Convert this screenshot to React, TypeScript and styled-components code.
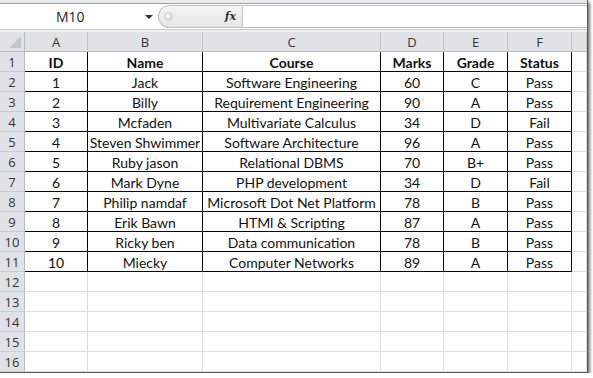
import React from "react";
import styled, { createGlobalStyle } from "styled-components";

const Global = createGlobalStyle`
  html, body { margin: 0; padding: 0; background: #ffffff; }
  body { font-family: "Lato", "Open Sans", sans-serif; }
`;

const Window = styled.div`
  width: 587px;
  height: 372px;
  border-right: 1px solid #5a5a5a;
  border-bottom: 1px solid #5a5a5a;
  box-shadow: 2px 2px 3px rgba(0, 0, 0, 0.55);
  overflow: hidden;
  display: flex;
  flex-direction: column;
  background: #fff;
`;

const TopStrip = styled.div`
  height: 3px;
  background: #e6e9ed;
  border-bottom: 1px solid #9aa0a6;
`;

const FormulaRow = styled.div`
  height: 25px;
  display: flex;
  align-items: stretch;
  background: #fff;
`;

const NameBox = styled.div`
  width: 158px;
  display: flex;
  align-items: center;
  position: relative;
  font-family: "Open Sans", sans-serif;
  font-size: 14px;
  color: #222;
`;

const NameText = styled.span`
  margin-left: 56px;
`;

const Arrow = styled.span`
  position: absolute;
  left: 145px;
  top: 11px;
  width: 0;
  height: 0;
  border-left: 4px solid transparent;
  border-right: 4px solid transparent;
  border-top: 4px solid #333;
`;

const FxPill = styled.div`
  width: 85px;
  margin: 1px 0 1px 0;
  background: linear-gradient(#f3f4f6, #e4e6ea);
  border: 1px solid #b9bec5;
  border-right: 1px solid #c5c9cf;
  border-radius: 12px 0 0 12px;
  display: flex;
  align-items: center;
  justify-content: space-between;
  padding: 0 6px 0 5px;
  box-sizing: border-box;
`;

const Grip = styled.span`
  width: 7px;
  height: 7px;
  border-radius: 50%;
  background: radial-gradient(circle at 40% 40%, #ffffff, #c4c8ce);
  border: 1px solid #c9cdd2;
`;

const Fx = styled.span`
  font-family: "DejaVu Serif", "Liberation Serif", serif;
  font-style: italic;
  font-weight: bold;
  font-size: 11px;
  color: #333;
`;

const FormulaInput = styled.div`
  flex: 1;
  margin: 1px 0;
  border-top: 1px solid #b9bec5;
  border-bottom: 1px solid #b9bec5;
  background: #fff;
`;

const Gap = styled.div`
  height: 3px;
  background: #eef0f2;
  border-top: 1px solid #c6cbd1;
  box-sizing: border-box;
`;

const Sheet = styled.div`
  display: grid;
  grid-template-columns: 25px 63px 115px 178px 63px 64px 64px 1fr;
  grid-auto-rows: 20px;
`;

const Corner = styled.div`
  background: #dfe3e8;
  border-right: 1px solid #b6bcc4;
  border-bottom: 1px solid #b6bcc4;
  box-sizing: border-box;
  position: relative;
  &::after {
    content: "";
    position: absolute;
    right: 3px;
    bottom: 3px;
    width: 0;
    height: 0;
    border-left: 12px solid transparent;
    border-bottom: 12px solid #c3c8cf;
  }
`;

const ColHead = styled.div`
  background: #dfe3e8;
  border-right: 1px solid #c0c6cd;
  border-bottom: 1px solid #b6bcc4;
  box-sizing: border-box;
  display: flex;
  align-items: center;
  justify-content: center;
  font-family: "Open Sans", sans-serif;
  font-size: 13px;
  color: #333;
`;

const RowHead = styled.div`
  background: #dfe3e8;
  border-right: 1px solid #b6bcc4;
  border-bottom: 1px solid #c6ccd3;
  box-sizing: border-box;
  display: flex;
  align-items: center;
  justify-content: center;
  font-family: "Open Sans", sans-serif;
  font-size: 13px;
  color: #333;
`;

const Cell = styled.div<{ $boxed?: boolean; $bold?: boolean }>`
  border-right: 1px solid ${(p) => (p.$boxed ? "#000" : "#dadcdd")};
  border-bottom: 1px solid ${(p) => (p.$boxed ? "#000" : "#dadcdd")};
  box-sizing: border-box;
  padding-top: 1px;
  display: flex;
  align-items: center;
  justify-content: center;
  white-space: nowrap;
  overflow: hidden;
  font-family: "Lato", "Open Sans", sans-serif;
  font-size: 14px;
  font-weight: ${(p) => (p.$bold ? 700 : 400)};
  color: #111;
`;

const cols = ["A", "B", "C", "D", "E", "F", ""];

const data: string[][] = [
  ["ID", "Name", "Course", "Marks", "Grade", "Status"],
  ["1", "Jack", "Software Engineering", "60", "C", "Pass"],
  ["2", "Billy", "Requirement Engineering", "90", "A", "Pass"],
  ["3", "Mcfaden", "Multivariate Calculus", "34", "D", "Fail"],
  ["4", "Steven Shwimmer", "Software Architecture", "96", "A", "Pass"],
  ["5", "Ruby jason", "Relational DBMS", "70", "B+", "Pass"],
  ["6", "Mark Dyne", "PHP development", "34", "D", "Fail"],
  ["7", "Philip namdaf", "Microsoft Dot Net Platform", "78", "B", "Pass"],
  ["8", "Erik Bawn", "HTMl & Scripting", "87", "A", "Pass"],
  ["9", "Ricky ben", "Data communication", "78", "B", "Pass"],
  ["10", "Miecky", "Computer Networks", "89", "A", "Pass"],
];

export default function App() {
  const rows = Array.from({ length: 16 }, (_, i) => i);
  return (
    <>
      <Global />
      <Window>
        <TopStrip />
        <FormulaRow>
          <NameBox>
            <NameText>M10</NameText>
            <Arrow />
          </NameBox>
          <FxPill>
            <Grip />
            <Fx>fx</Fx>
          </FxPill>
          <FormulaInput />
        </FormulaRow>
        <Gap />
        <Sheet>
          <Corner />
          {cols.map((c, i) => (
            <ColHead key={i}>{c}</ColHead>
          ))}
          {rows.map((r) => (
            <React.Fragment key={r}>
              <RowHead>{r + 1}</RowHead>
              {cols.map((_, ci) => {
                const rowData = data[r];
                const boxed = !!rowData && ci < 6;
                return (
                  <Cell key={ci} $boxed={boxed} $bold={r === 0}>
                    {boxed ? rowData[ci] : ""}
                  </Cell>
                );
              })}
            </React.Fragment>
          ))}
        </Sheet>
      </Window>
    </>
  );
}
